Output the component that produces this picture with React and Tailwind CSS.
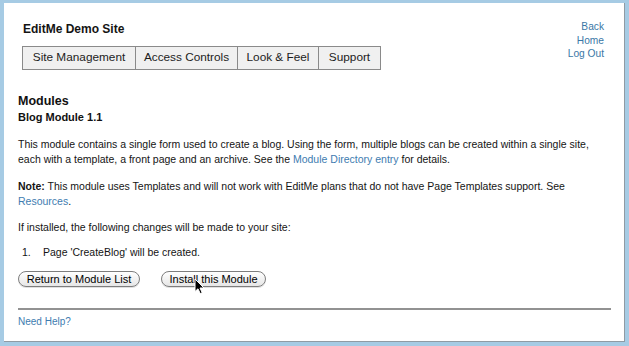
import React from 'react';

const tabs = [
  { label: 'Site Management', w: 'w-[112px]' },
  { label: 'Access Controls', w: 'w-[102px]' },
  { label: 'Look & Feel', w: 'w-[81px]' },
  { label: 'Support', w: 'w-[62px]' },
];

const Cursor = () => (
  <svg width="12" height="17" viewBox="0 0 12 17" className="absolute left-[194px] top-[278px]">
    <path d="M1 1 L1 13.5 L4 10.8 L6.2 15.6 L8.2 14.7 L6 10 L10 10 Z" fill="#000" stroke="#fff" strokeWidth="1" strokeLinejoin="round" />
  </svg>
);

const App = () => {
  return (
    <div className="relative w-[629px] h-[346px] bg-[#a6cbe4] overflow-hidden font-['Liberation_Sans',Arial,sans-serif] text-[#141414]">
      <div className="ml-[4px] mt-[3px] w-[621px] h-[339px] bg-white border-r border-b border-[#8f9ba4] px-[14px] pt-[17px]">
        {/* header */}
        <div className="flex justify-between">
          <div className="pl-[4px]">
            <div className="mt-[2px] ml-px h-[15px] leading-[15px] text-[12px] font-bold">EditMe Demo Site</div>
            <div className="mt-[9px] flex h-[24px] border border-[#8a8a8a] bg-[#f0f0f0]">
              {tabs.map((t, i) => (
                <div
                  key={t.label}
                  className={`${t.w} flex items-center justify-center text-[11.8px] text-[#1c1c1c] ${i > 0 ? 'border-l border-[#8a8a8a]' : ''}`}
                >
                  {t.label}
                </div>
              ))}
            </div>
          </div>
          <div className="pr-[6px] text-right text-[10.2px] leading-[13.5px] text-[#3a77a6]">
            <div>Back</div>
            <div>Home</div>
            <div>Log Out</div>
          </div>
        </div>

        {/* content */}
        <h1 className="mt-[23px] text-[12.5px] leading-[16px] font-bold text-[#111]">Modules</h1>
        <h2 className="mt-px text-[11px] leading-[14px] font-bold text-[#111]">Blog Module 1.1</h2>

        <div className="text-[10.5px] leading-[15px]">
          <p className="mt-[12.5px] whitespace-nowrap">
            This module contains a single form used to create a blog. Using the form, multiple blogs can be created within a single site,
            <br />
            each with a template, a front page and an archive. See the{' '}
            <span className="text-[#3e7cb0]">Module Directory entry</span> for details.
          </p>

          <p className="mt-[12px] whitespace-nowrap">
            <b>Note:</b> This module uses Templates and will not work with EditMe plans that do not have Page Templates support. See
            <br />
            <span className="text-[#3e7cb0]">Resources</span>.
          </p>

          <p className="mt-[11px]">If installed, the following changes will be made to your site:</p>

          <div className="mt-[10px] flex">
            <span className="ml-[4px] w-[21px]">1.</span>
            <span>Page 'CreateBlog' will be created.</span>
          </div>
        </div>

        <div className="mt-[11.5px] flex gap-[21px]">
          <button className="w-[122px] h-[16px] rounded-full border border-[#7d7d7d] bg-gradient-to-b from-white to-[#e6e6e6] text-[11px] leading-[14px] text-black shadow-[0_1px_0_rgba(0,0,0,0.12)]">
            Return to Module List
          </button>
          <button className="w-[105px] h-[16px] rounded-full border border-[#7d7d7d] bg-gradient-to-b from-white to-[#e6e6e6] text-[11px] leading-[14px] text-black shadow-[0_1px_0_rgba(0,0,0,0.12)]">
            Install this Module
          </button>
        </div>

        <div className="mt-[20.5px] h-[2px] bg-[#929292] w-[593px]" />

        <div className="mt-[4px] text-[10px] leading-[15px] text-[#3e7cb0]">Need Help?</div>
      </div>
      <Cursor />
    </div>
  );
};

export default App;
